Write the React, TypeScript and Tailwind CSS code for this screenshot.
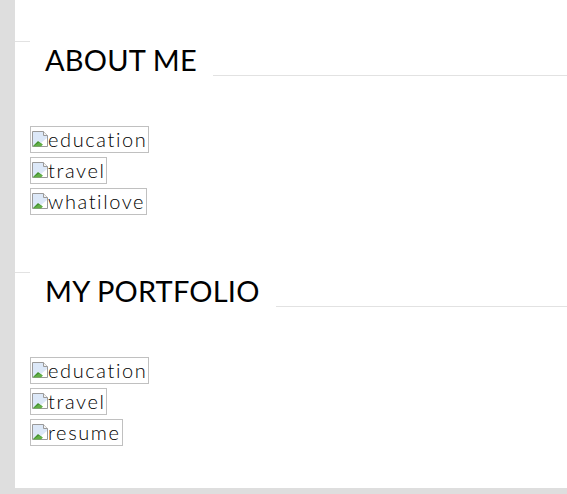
import React from "react";

const BrokenIcon = () => (
  <svg width="16" height="16" viewBox="0 0 16 16" className="shrink-0">
    <path d="M0.5 0.5h11l4 4v11h-15z" fill="#dce8f8" stroke="#9a9a9a" />
    <path d="M11.5 0.5v4h4" fill="#f4f4f4" stroke="#9a9a9a" />
    <path d="M1 15l5-5 3 2 6-5v8z" fill="#fff" />
    <path d="M1 15l5-5 4 3-4 2z" fill="#3f8f2f" />
    <path d="M1 15.5l6-4 4 2-2 2z" fill="#62b046" />
  </svg>
);

const Broken = ({ alt }: { alt: string }) => (
  <div className="flex">
    <span className="inline-flex items-start border border-[#c0c0c0] px-[1px] h-[27px]">
      <span className="mt-[4px]">
        <BrokenIcon />
      </span>
      <span className="text-[20px] leading-[24px] tracking-[1.6px] text-black font-light">{alt}</span>
    </span>
  </div>
);

const Section = ({ title, items }: { title: string; items: string[] }) => (
  <section>
    <div className="flex items-start">
      <div className="w-[15px] border-t border-[#e2e2e2]" />
      <h2 className="ml-[15px] mt-[2px] text-[29px] leading-[34px] tracking-[0.2px] text-black font-normal whitespace-nowrap">
        {title}
      </h2>
      <div className="flex-1 ml-[16px] h-[35px] border-b border-[#e2e2e2]" />
    </div>
    <div className="flex flex-col gap-[4px] pl-[15px] mt-[49px]">
      {items.map((it) => (
        <Broken key={it} alt={it} />
      ))}
    </div>
  </section>
);

export default function App() {
  return (
    <div className="w-[567px] h-[494px] bg-[#dedede] overflow-hidden" style={{ fontFamily: "Lato, 'Noto Sans', sans-serif" }}>
      <div className="ml-[15px] h-[488px] bg-white pt-[41px]">
        <Section title="ABOUT ME" items={["education", "travel", "whatilove"]} />
        <div className="h-[57px]" />
        <Section title="MY PORTFOLIO" items={["education", "travel", "resume"]} />
      </div>
    </div>
  );
}
